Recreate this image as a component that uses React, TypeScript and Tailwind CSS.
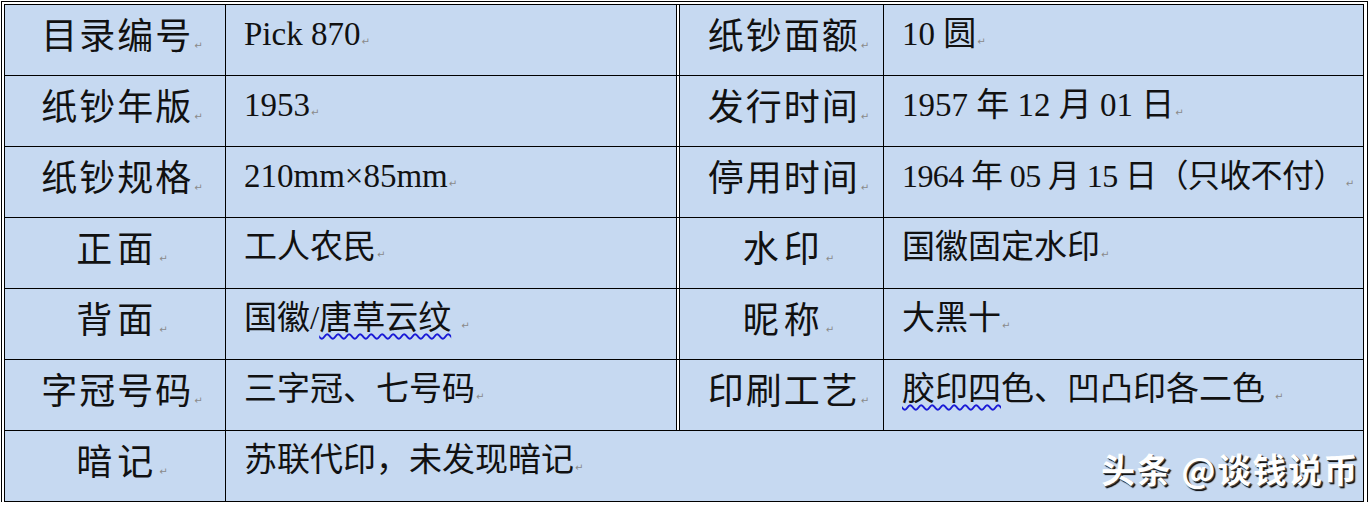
import React from "react";

function Mark({ space = false }: { space?: boolean }) {
  return (
    <span
      className={`${space ? "ml-[10px]" : "ml-[1px]"} font-['DejaVu_Sans',sans-serif] text-[10px] leading-none tracking-normal text-[#8a8a8a]`}
    >
      ↵
    </span>
  );
}

type Cell = { label: string; wide?: boolean; value: React.ReactNode; space?: boolean; tight?: boolean };

const wavy =
  "underline decoration-wavy decoration-[#1a1ad6] decoration-[1.5px] underline-offset-[4px]";

const rows: { l: Cell; r: Cell }[] = [
  {
    l: { label: "目录编号", value: "Pick 870" },
    r: { label: "纸钞面额", value: "10 圆" },
  },
  {
    l: { label: "纸钞年版", value: "1953" },
    r: { label: "发行时间", value: "1957 年 12 月 01 日" },
  },
  {
    l: { label: "纸钞规格", value: "210mm×85mm" },
    r: { label: "停用时间", tight: true, value: "1964 年 05 月 15 日（只收不付）" },
  },
  {
    l: { label: "正面", wide: true, value: "工人农民" },
    r: { label: "水印", wide: true, value: "国徽固定水印" },
  },
  {
    l: {
      label: "背面",
      wide: true,
      space: true,
      value: (
        <>
          国徽/<span className={wavy}>唐草云纹</span>
        </>
      ),
    },
    r: { label: "昵称", wide: true, value: "大黑十" },
  },
  {
    l: { label: "字冠号码", value: "三字冠、七号码" },
    r: {
      label: "印刷工艺",
      space: true,
      value: (
        <>
          <span className={wavy}>胶印四</span>色、凹凸印各二色
        </>
      ),
    },
  },
];

function Label({ text, wide, className }: { text: string; wide?: boolean; className: string }) {
  return (
    <div
      className={`${className} pl-[14px] pt-[10px] text-center text-[36px] leading-[44px] ${wide ? "tracking-[5px]" : "tracking-[2px]"}`}
    >
      {text}
      <Mark />
    </div>
  );
}

function Value({
  children,
  space,
  tight,
  className,
}: {
  children: React.ReactNode;
  space?: boolean;
  tight?: boolean;
  className: string;
}) {
  return (
    <div
      className={`${className} whitespace-nowrap pl-[18px] pt-[7px] leading-[44px] ${tight ? "text-[32px] tracking-[-0.6px]" : "text-[33px]"}`}
    >
      {children}
      <Mark space={space} />
    </div>
  );
}

export default function App() {
  return (
    <div className="h-[508px] w-[1372px] bg-white pl-[1px] pt-[1px] font-['Liberation_Serif','Noto_Sans_CJK_SC',serif] text-[#111]">
      <div className="w-[1367px] border-l border-r border-t border-black bg-white pl-[2px] pr-[3px] pt-[2px]">
        <div className="w-[1360px] border border-black bg-[#c6d9f1]">
          {rows.map((row, i) => (
            <div key={i} className="flex h-[71px] border-b border-black">
              <Label text={row.l.label} wide={row.l.wide} className="w-[221px] shrink-0 border-r border-black" />
              <Value space={row.l.space} tight={row.l.tight} className="w-[451px] shrink-0 border-r border-black">
                {row.l.value}
              </Value>
              <div className="w-[2px] shrink-0 bg-white" />
              <Label
                text={row.r.label}
                wide={row.r.wide}
                className="w-[205px] shrink-0 border-l border-r border-black"
              />
              <Value space={row.r.space} tight={row.r.tight} className="min-w-0 flex-1">
                {row.r.value}
              </Value>
            </div>
          ))}
          <div className="flex h-[70px]">
            <Label text="暗记" wide className="w-[221px] shrink-0 border-r border-black" />
            <div className="flex min-w-0 flex-1 items-start justify-between">
              <div className="whitespace-nowrap pl-[18px] pt-[7px] text-[33px] leading-[44px]">
                苏联代印，未发现暗记
                <Mark />
              </div>
              <div className="mb-[10px] mr-[4px] self-end whitespace-nowrap font-['Noto_Sans_CJK_SC',sans-serif] text-[34px] font-bold leading-[44px] tracking-[1.5px] text-white [text-shadow:1px_1px_0_#444,2px_2px_1px_#000]">
                头条 @谈钱说币
              </div>
            </div>
          </div>
        </div>
      </div>
    </div>
  );
}
